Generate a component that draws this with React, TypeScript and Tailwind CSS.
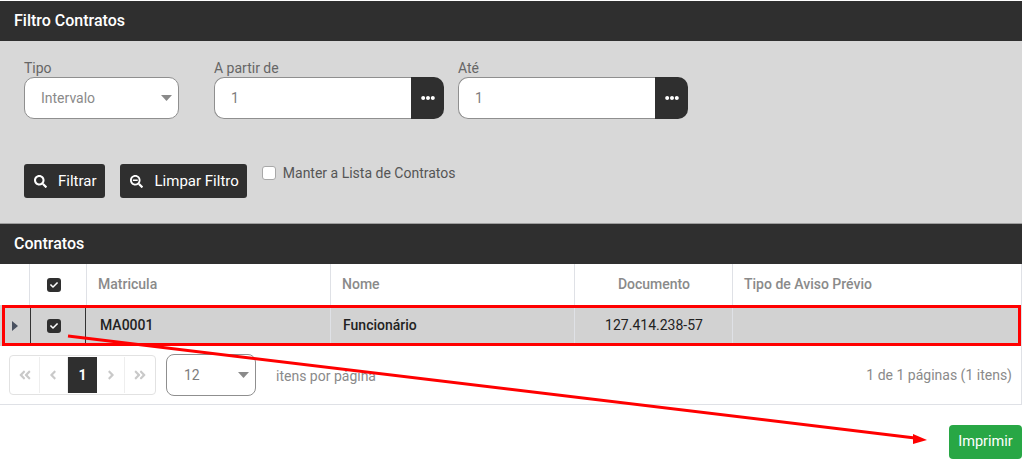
import type { ReactNode } from 'react'
import {
  FaAngleDoubleLeft,
  FaAngleDoubleRight,
  FaAngleLeft,
  FaAngleRight,
  FaCheck,
  FaEllipsisH,
  FaSearch,
  FaSearchMinus,
} from 'react-icons/fa'

const HEAD_COLS = 'grid grid-cols-[30px_57px_244px_244px_158px_1fr]'
const ROW_COLS = 'grid grid-cols-[31px_55px_245px_244px_158px_1fr]'

function Caret() {
  return (
    <svg width="11" height="6" viewBox="0 0 11 6" className="shrink-0">
      <path d="M0 0h11L5.5 6z" fill="#8a8a8a" />
    </svg>
  )
}

function CheckMark() {
  return (
    <span className="grid h-[14px] w-[14px] place-items-center rounded-[3px] bg-[#2f2f2f] text-white">
      <FaCheck size={8} />
    </span>
  )
}

function Bar({ title }: { title: string }) {
  return (
    <div className="flex h-[40px] items-center bg-[#2f2f2f] px-[14px] text-[16px] font-medium text-white">
      {title}
    </div>
  )
}

function Field({ label, left, width }: { label: string; left: string; width: string }) {
  return (
    <div className={`${width} ${left}`}>
      <div className="h-[17px] text-[14px] leading-[17px] text-[#666]">{label}</div>
      <div className="flex h-[42px]">
        <div className="flex flex-1 items-center rounded-l-[10px] border border-r-0 border-[#8f8f8f] bg-white pl-[16px] text-[14px] text-[#7d7d7d]">
          1
        </div>
        <div className="grid w-[33px] place-items-center rounded-r-[10px] bg-[#2f2f2f] text-white">
          <FaEllipsisH size={14} />
        </div>
      </div>
    </div>
  )
}

function DarkButton({ icon, gap, children }: { icon: ReactNode; gap: string; children: ReactNode }) {
  return (
    <button className={`flex h-[34px] items-center ${gap} rounded-[3px] bg-[#2f2f2f] pl-[10px] pr-[8px] text-[15px] text-white`}>
      {icon}
      {children}
    </button>
  )
}

function Th({ children, center, last }: { children?: ReactNode; center?: boolean; last?: boolean }) {
  return (
    <div
      className={`flex items-center px-[11px] text-[14px] font-medium text-[#8a8a8a] ${
        last ? '' : 'border-r border-[#dfe1e6]'
      } ${center ? 'justify-center' : ''}`}
    >
      {children}
    </div>
  )
}

function Td({ children, center, last }: { children?: ReactNode; center?: boolean; last?: boolean }) {
  return (
    <div
      className={`flex items-center px-[12px] text-[14px] font-medium text-[#222] ${
        last ? '' : 'border-r border-[#dfe1e6]'
      } ${center ? 'justify-center' : ''}`}
    >
      {children}
    </div>
  )
}

function PageBtn({ children }: { children: ReactNode }) {
  return (
    <div className="grid w-[29px] place-items-center border-r border-[#eeeeee] text-[#c9c9c9] last:border-r-0">
      {children}
    </div>
  )
}

export default function App() {
  return (
    <div
      className="relative h-[466px] w-[1029px] overflow-hidden bg-white pt-px"
      style={{ fontFamily: 'Roboto, "Liberation Sans", sans-serif' }}
    >
      <div className="w-[1022px]">
        <Bar title="Filtro Contratos" />

        <div className="h-[183px] border-b border-[#9e9e9e] bg-[#d8d8d8] px-[24px] pt-[19px]">
          <div className="flex">
            <div className="w-[155px]">
              <div className="h-[17px] text-[14px] leading-[17px] text-[#666]">Tipo</div>
              <div className="flex h-[42px] items-center justify-between rounded-[10px] border border-[#8f8f8f] bg-white pl-[16px] pr-[6px] text-[14px] text-[#8a8a8a]">
                Intervalo
                <Caret />
              </div>
            </div>
            <Field label="A partir de" left="ml-[35px]" width="w-[230px]" />
            <Field label="Até" left="ml-[14px]" width="w-[230px]" />
          </div>

          <div className="mt-[45px] flex">
            <DarkButton icon={<FaSearch size={13} />} gap="gap-[11px]">
              Filtrar
            </DarkButton>
            <div className="ml-[15px]">
              <DarkButton icon={<FaSearchMinus size={13} />} gap="gap-[12px]">
                Limpar Filtro
              </DarkButton>
            </div>
            <label className="ml-[15px] flex h-[18px] items-center gap-[7px] text-[14px] text-[#555]">
              <span className="h-[14px] w-[14px] rounded-[3px] border border-[#a8a8a8] bg-white" />
              Manter a Lista de Contratos
            </label>
          </div>
        </div>

        <Bar title="Contratos" />

        <div className="border-r border-b border-[#dfe1e6]">
          <div className={`${HEAD_COLS} h-[41px]`}>
            <Th />
            <div className="flex items-center border-r border-[#dfe1e6] pl-[17px]">
              <CheckMark />
            </div>
            <Th>Matricula</Th>
            <Th>Nome</Th>
            <Th center>
              <span className="ml-px">Documento</span>
            </Th>
            <Th last>Tipo de Aviso Prévio</Th>
          </div>

          <div className={`${ROW_COLS} h-[41px] bg-[#d2d2d2]`}>
            <div className="flex items-center justify-center border-r border-[#333]">
              <svg width="6" height="10" viewBox="0 0 6 10">
                <path d="M0 0l6 5-6 5z" fill="#4a5160" />
              </svg>
            </div>
            <div className="flex items-center border-r border-[#333] pl-[16px]">
              <CheckMark />
            </div>
            <Td>
              <span className="ml-[2px]">MA0001</span>
            </Td>
            <Td>Funcionário</Td>
            <Td center>
              <span className="ml-px font-normal">127.414.238-57</span>
            </Td>
            <Td last />
          </div>

          <div className="flex h-[58px] items-center pl-[9px] pr-[9px]">
            <div className="flex h-[40px] w-[147px] rounded-[4px] border border-[#e2e2e2] p-px">
              <PageBtn>
                <FaAngleDoubleLeft size={14} />
              </PageBtn>
              <PageBtn>
                <FaAngleLeft size={14} />
              </PageBtn>
              <div className="grid w-[29px] place-items-center bg-[#2f2f2f] text-[14px] font-bold text-white">1</div>
              <PageBtn>
                <FaAngleRight size={14} />
              </PageBtn>
              <PageBtn>
                <FaAngleDoubleRight size={14} />
              </PageBtn>
            </div>
            <div className="ml-[10px] flex h-[42px] w-[90px] items-center justify-between rounded-[8px] border border-[#8f8f8f] pl-[17px] pr-[6px] text-[14px] text-[#7d7d7d]">
              12
              <Caret />
            </div>
            <span className="ml-[20px] mt-[2px] text-[14px] text-[#8a8a8a]">itens por página</span>
            <span className="ml-auto text-[14px] text-[#8a8a8a]">1 de 1 páginas (1 itens)</span>
          </div>
        </div>

        <div className="mt-[20px] flex justify-end">
          <button className="h-[34px] w-[73px] rounded-[4px] bg-[#28a745] text-[14.5px] text-white">Imprimir</button>
        </div>
      </div>

      {/* red annotation over the screenshot */}
      <svg className="absolute left-0 top-0" width="1029" height="466" viewBox="0 0 1029 466" fill="none">
        <rect x="3.5" y="306.5" width="1016" height="38" stroke="#ff0000" strokeWidth="3" />
        <path d="M68 336L915 438" stroke="#ff0000" strokeWidth="3" />
        <path d="M913 434L927 440L913 444z" fill="#ff0000" />
      </svg>
    </div>
  )
}
